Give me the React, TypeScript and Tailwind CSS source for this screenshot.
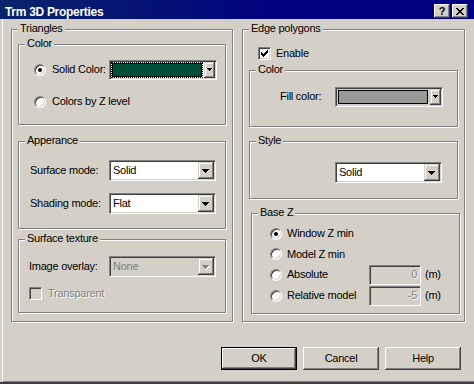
import React from "react";

const sunken =
  "border border-t-[#808080] border-l-[#808080] border-r-white border-b-white shadow-[inset_1px_1px_0_#404040,inset_-1px_-1px_0_#d4d0c8]";
const raised =
  "bg-[#d4d0c8] shadow-[inset_-1px_-1px_0_#404040,inset_1px_1px_0_#fff,inset_-2px_-2px_0_#808080]";
const arrowBtn =
  "bg-[#d4d0c8] shadow-[inset_-1px_-1px_0_#404040,inset_1px_1px_0_#d4d0c8,inset_-2px_-2px_0_#808080,inset_2px_2px_0_#fff]";
const grayText = "text-[#808080] [text-shadow:1px_1px_0_#fff]";

const Group = ({ label, className, children }: { label: string; className: string; children?: React.ReactNode }) => (
  <div className={`relative border border-[#808080] shadow-[1px_1px_0_#fff,inset_1px_1px_0_#fff] ${className}`}>
    <span className="absolute -top-[8px] left-[6px] bg-[#d4d0c8] px-[2px] leading-[13px] whitespace-nowrap">{label}</span>
    {children}
  </div>
);

const Arrow = ({ disabled }: { disabled?: boolean }) => (
  <svg width="8" height="5" viewBox="0 0 8 5" shapeRendering="crispEdges">
    {disabled && (
      <g fill="#fff">
        <rect x="1" y="1" width="7" height="1" />
        <rect x="2" y="2" width="5" height="1" />
        <rect x="3" y="3" width="3" height="1" />
        <rect x="4" y="4" width="1" height="1" />
      </g>
    )}
    <g fill={disabled ? "#808080" : "#000"}>
      <rect x="0" y="0" width="7" height="1" />
      <rect x="1" y="1" width="5" height="1" />
      <rect x="2" y="2" width="3" height="1" />
      <rect x="3" y="3" width="1" height="1" />
    </g>
  </svg>
);

const Combo = ({ value, disabled, className }: { value: string; disabled?: boolean; className: string }) => (
  <div className={`${sunken} h-[21px] flex ${disabled ? "bg-[#d4d0c8]" : "bg-white"} ${className}`}>
    <span className={`flex-1 pl-[3px] leading-[19px] ${disabled ? "text-[#808080]" : ""}`}>{value}</span>
    <span className={`${arrowBtn} m-[1px] w-[16px] h-[17px] flex items-center justify-center pt-[1px]`}>
      <Arrow disabled={disabled} />
    </span>
  </div>
);

// owner-drawn colour picker combo
const ColorCombo = ({ color, focus, className }: { color: string; focus?: boolean; className: string }) => (
  <div className={`${sunken} h-[20px] flex ${focus ? "bg-white" : "bg-[#d4d0c8]"} ${className}`}>
    <div className={`flex-1 m-[1px] p-[1px] flex ${focus ? "outline outline-1 outline-dotted outline-black -outline-offset-1" : ""}`}>
      <div className="flex-1 border border-black" style={{ background: color }} />
    </div>
    <span className={`${arrowBtn} my-[1px] mr-[1px] w-[11px] flex items-center justify-center`}>
      <svg width="5" height="3" viewBox="0 0 5 3" shapeRendering="crispEdges">
        <rect x="0" y="0" width="5" height="1" />
        <rect x="1" y="1" width="3" height="1" />
        <rect x="2" y="2" width="1" height="1" />
      </svg>
    </span>
  </div>
);

const Radio = ({ checked }: { checked?: boolean }) => (
  <span className={`w-[12px] h-[12px] rounded-full bg-white flex items-center justify-center shrink-0 ${sunken}`}>
    {checked && <span className="w-[4px] h-[4px] rounded-full bg-black" />}
  </span>
);

const checkRows = ["......#", ".....##", "#...###", "##.###.", "#####..", ".###...", "..#...."];

const Checkbox = ({ checked, disabled }: { checked?: boolean; disabled?: boolean }) => (
  <span className={`w-[13px] h-[13px] flex items-center justify-center shrink-0 ${disabled ? "bg-[#d4d0c8]" : "bg-white"} ${sunken}`}>
    {checked && (
      <svg width="7" height="7" viewBox="0 0 7 7" shapeRendering="crispEdges">
        {checkRows.map((row, y) =>
          row.split("").map((c, x) => (c === "#" ? <rect key={`${x}-${y}`} x={x} y={y} width="1" height="1" /> : null))
        )}
      </svg>
    )}
  </span>
);

const Edit = ({ value }: { value: string }) => (
  <span className={`${sunken} bg-[#d4d0c8] w-[52px] h-[20px] flex items-center justify-end pr-[3px] ${grayText}`}>{value}</span>
);

const Button = ({ label, primary }: { label: string; primary?: boolean }) =>
  primary ? (
    <button className="w-[76px] h-[23px] border border-black flex">
      <span className={`${raised} flex-1 flex items-center justify-center`}>{label}</span>
    </button>
  ) : (
    <button className={`${raised} w-[76px] h-[23px] flex items-center justify-center`}>{label}</button>
  );

export default function App() {
  return (
    <div className="w-[474px] h-[384px] bg-[#d4d0c8] flex flex-col overflow-hidden text-[11px] tracking-[-0.25px] leading-none text-black font-['Liberation_Sans',Arial,sans-serif]">
      {/* Title bar */}
      <div className="h-[19px] shrink-0 flex items-start bg-[linear-gradient(to_right,#0a246a,#000080_60%)] pl-[5px] pr-[6px]">
        <span className="pt-[6px] text-white font-bold text-[12px] tracking-[-0.3px] leading-[13px]">Trm 3D Properties</span>
        <div className="ml-auto mt-[4px] flex gap-[2px]">
          <span className={`${raised} w-[16px] h-[14px] flex items-center justify-center font-bold text-[11px] leading-none`}>?</span>
          <span className={`${raised} w-[16px] h-[14px] flex items-center justify-center`}>
            <svg width="8" height="7" viewBox="0 0 8 7" shapeRendering="crispEdges">
              <path d="M0 0h2v1H0zM1 1h2v1H1zM2 2h4v1H2zM3 3h2v1H3zM2 4h4v1H2zM1 5h2v1H1zM0 6h2v1H0zM6 0h2v1H6zM5 1h2v1H5zM5 5h2v1H5zM6 6h2v1H6z" />
            </svg>
          </span>
        </div>
      </div>

      {/* Body */}
      <div className="flex-1 flex flex-col ml-[2px] border-l border-white border-b border-b-[#808080] pl-[8px]">
        <div className="flex mt-[10px]">
          {/* Triangles */}
          <Group label="Triangles" className="w-[222px] h-[293px] flex flex-col">
            <Group label="Color" className="mt-[14px] ml-[6px] w-[208px] h-[81px] flex flex-col">
              <div className="mt-[14px] h-[21px] flex items-center pl-[15px] pr-[8px]">
                <Radio checked />
                <span className="ml-[6px]">Solid Color:</span>
                <ColorCombo color="#004d38" focus className="ml-auto w-[108px]" />
              </div>
              <div className="mt-[11px] h-[21px] flex items-center pl-[15px]">
                <Radio />
                <span className="ml-[6px]">Colors by Z level</span>
              </div>
            </Group>

            <Group label="Apperance" className="mt-[16px] ml-[6px] w-[208px] h-[88px] flex flex-col">
              <div className="mt-[18px] h-[21px] flex items-center pl-[11px] pr-[9px]">
                <span>Surface mode:</span>
                <Combo value="Solid" className="ml-auto w-[107px]" />
              </div>
              <div className="mt-[12px] h-[21px] flex items-center pl-[11px] pr-[9px]">
                <span>Shading mode:</span>
                <Combo value="Flat" className="ml-auto w-[107px]" />
              </div>
            </Group>

            <Group label="Surface texture" className="mt-[10px] ml-[6px] w-[208px] h-[74px] flex flex-col">
              <div className="mt-[16px] h-[21px] flex items-center pl-[10px] pr-[9px]">
                <span>Image overlay:</span>
                <Combo value="None" disabled className="ml-auto w-[107px]" />
              </div>
              <div className="mt-[10px] h-[13px] flex items-center pl-[10px]">
                <Checkbox disabled />
                <span className={`ml-[6px] ${grayText}`}>Transparent</span>
              </div>
            </Group>
          </Group>

          {/* Edge polygons */}
          <Group label="Edge polygons" className="ml-[9px] w-[223px] h-[293px] flex flex-col">
            <div className="mt-[17px] h-[13px] flex items-center pl-[15px]">
              <Checkbox checked />
              <span className="ml-[5px]">Enable</span>
            </div>

            <Group label="Color" className="mt-[10px] ml-[6px] w-[209px] h-[57px] flex flex-col">
              <div className="mt-[15px] h-[21px] flex items-center pl-[30px] pr-[14px]">
                <span>Fill color:</span>
                <ColorCombo color="#999999" className="ml-auto w-[108px]" />
              </div>
            </Group>

            <Group label="Style" className="mt-[14px] ml-[6px] w-[209px] h-[58px] flex flex-col">
              <div className="mt-[20px] pl-[85px]">
                <Combo value="Solid" className="w-[107px]" />
              </div>
            </Group>

            <Group label="Base Z" className="mt-[14px] ml-[8px] w-[209px] h-[101px] flex flex-col">
              <div className="mt-[9px] flex flex-col pl-[18px]">
                <div className="h-[21px] flex items-center">
                  <Radio checked />
                  <span className="ml-[5px]">Window Z min</span>
                </div>
                <div className="h-[20px] flex items-center">
                  <Radio />
                  <span className="ml-[5px]">Model Z min</span>
                </div>
                <div className="h-[21px] flex items-center">
                  <Radio />
                  <span className="ml-[5px] w-[82px]">Absolute</span>
                  <Edit value="0" />
                  <span className="ml-[4px]">(m)</span>
                </div>
                <div className="h-[21px] flex items-center">
                  <Radio />
                  <span className="ml-[5px] w-[82px]">Relative model</span>
                  <Edit value="-5" />
                  <span className="ml-[4px]">(m)</span>
                </div>
              </div>
            </Group>
          </Group>
        </div>

        {/* Buttons */}
        <div className="mt-[25px] flex justify-end gap-[6px] pr-[13px]">
          <Button label="OK" primary />
          <Button label="Cancel" />
          <Button label="Help" />
        </div>
      </div>
      <div className="h-[2px] shrink-0 bg-[#404040]" />
    </div>
  );
}
